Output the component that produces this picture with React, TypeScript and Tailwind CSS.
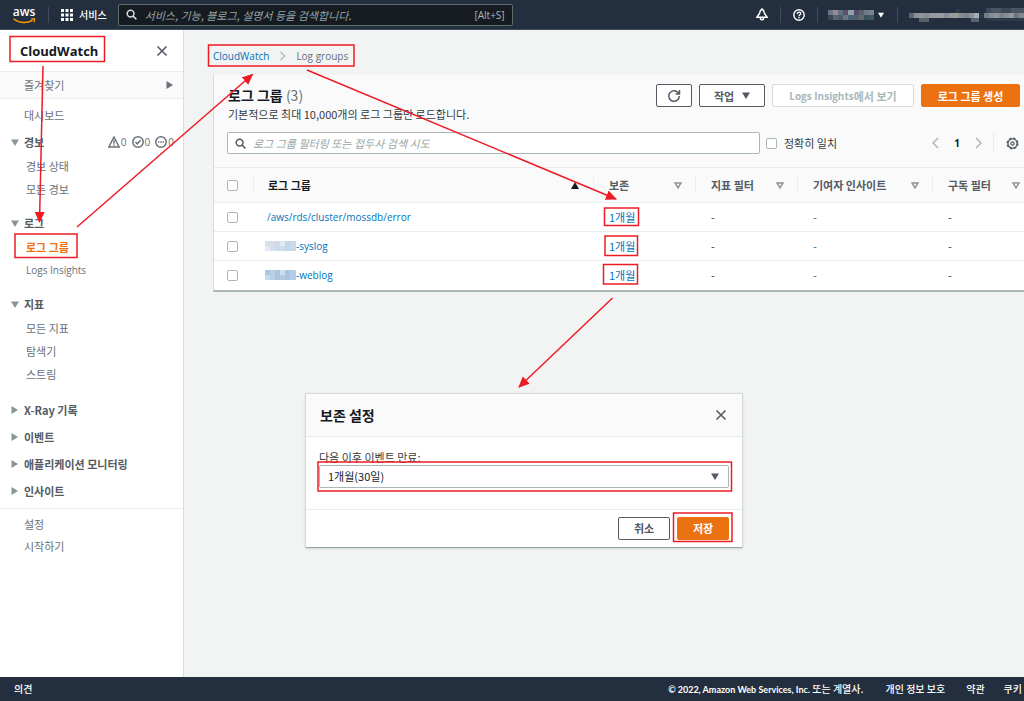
import type { ReactNode } from "react";

type IconProps = { className?: string };

const Search = ({ className }: IconProps) => (
  <svg viewBox="0 0 12 12" className={className} fill="none" stroke="currentColor" strokeWidth="1.7" aria-hidden="true">
    <circle cx="5" cy="5" r="3.7" />
    <path d="M7.7 7.7 11.3 11.3" />
  </svg>
);

const Close = ({ className }: IconProps) => (
  <svg viewBox="0 0 12 12" className={className} fill="none" stroke="currentColor" strokeWidth="1.6" aria-hidden="true">
    <path d="M1.5 1.5 10.5 10.5M10.5 1.5 1.5 10.5" />
  </svg>
);

const Down = ({ className }: IconProps) => (
  <svg viewBox="0 0 8 7" className={className} fill="currentColor" aria-hidden="true">
    <path d="M0 .5h8L4 7z" />
  </svg>
);

const Right = ({ className }: IconProps) => (
  <svg viewBox="0 0 7 8" className={className} fill="currentColor" aria-hidden="true">
    <path d="M.5 0v8L7 4z" />
  </svg>
);

const Chevron = ({ className }: IconProps) => (
  <svg viewBox="0 0 7 12" className={className} fill="none" stroke="currentColor" strokeWidth="1.5" aria-hidden="true">
    <path d="M1 1 6 6 1 11" />
  </svg>
);

const SortOutline = ({ className }: IconProps) => (
  <svg viewBox="0 0 8 7" className={className} fill="none" stroke="currentColor" strokeWidth="1.5" aria-hidden="true">
    <path d="M1 1h6L4 5.8z" />
  </svg>
);

const USER_MOSAIC = [
  ["#66788c", "#9d8a8f", "#5f7487", "#5e4f6d", "#93a3a5", "#54496a", "#5a616b", "#6b7a83", "#72858a"],
  ["#38485a", "#5b6471", "#50596c", "#6a7683", "#4b6070", "#4f6270", "#646b6c", "#3d5360", "#435866"],
];
const ACCOUNT_MOSAIC = [
  "#566684", "#8b8f96", "#909699", "#868e94", "#949a9d", "#959b9e", "#9a9d9f", "#868e98", "#989a9c", "#9b9c99", "#868b93",
  "#7a8590", "#8c9298", "#a3b0b8", "#2b3848", "#737b86", "#868d96", "#8e949b", "#7a8490", "#858c95", "#9499a0", "#6e7781", "#808892",
];

function Header() {
  return (
    <header className="flex h-[30px] items-center border-b border-[#414d5c] bg-[#232f3e] text-white">
      <a href="#home" className="ml-3 flex w-6 flex-col items-center pt-px" aria-label="aws">
        <span className="font-[Open_Sans,sans-serif] text-[12px] leading-[11px] font-semibold">aws</span>
        <svg viewBox="0 0 24 7" className="h-[7px] w-6" fill="none" stroke="#f90" aria-hidden="true">
          <path d="M1.500 1.800C7 6.500 15 6.600 20.500 3.400" strokeWidth="1.500" />
          <path d="M19 2.200 22.600 1.800 22 5.400" strokeWidth="1.200" />
        </svg>
      </a>
      <span className="ml-3 h-4 w-px bg-[#414d5c]" />
      <button className="ml-3 flex items-center gap-[6px] text-[10px] leading-[14px] font-medium">
        <svg viewBox="0 0 12 12" className="h-3 w-3" fill="currentColor" aria-hidden="true">
          <path d="M0 0h3v3H0zM4.500 0h3v3h-3zM9 0h3v3H9zM0 4.500h3v3H0zM4.500 4.500h3v3h-3zM9 4.500h3v3H9zM0 9h3v3H0zM4.500 9h3v3h-3zM9 9h3v3H9z" />
        </svg>
        서비스
      </button>
      <label className="ml-[11px] flex h-[22px] w-[395px] shrink-0 items-center gap-2 rounded-[2px] border border-[#5d6b6b] bg-[#161b22] px-[7px]">
        <Search className="h-[11px] w-[11px] text-[#d5dbdb]" />
        <input
          type="search"
          aria-label="검색"
          placeholder="서비스, 기능, 블로그, 설명서 등을 검색합니다."
          className="min-w-0 flex-1 bg-transparent text-[11px] outline-none placeholder:text-[#95a5a6] placeholder:italic"
        />
        <span className="font-[Open_Sans,sans-serif] text-[10px] text-[#aab7b8]">[Alt+S]</span>
      </label>
      <div className="ml-auto flex items-center">
        <button aria-label="알림">
          <svg viewBox="0 0 12 13" className="h-[13px] w-3" fill="none" stroke="currentColor" strokeWidth="1.500" aria-hidden="true">
            <path d="M6 1C4.200 2 3.700 4 3.500 5.500L1 9.200h10L8.500 5.500C8.300 4 7.800 2 6 1zM4.300 9.500c0 3 3.400 3 3.400 0" />
          </svg>
        </button>
        <span className="ml-3 h-4 w-px bg-[#414d5c]" />
        <button aria-label="도움말" className="ml-3">
          <svg viewBox="0 0 12 12" className="h-3 w-3" fill="none" stroke="currentColor" strokeWidth="1.400" aria-hidden="true">
            <circle cx="6" cy="6" r="5.200" />
            <path d="M4.300 4.900C4.300 2.500 7.800 2.600 7.700 4.700 7.600 5.900 6 5.700 6 7.200M6 8v1.300" />
          </svg>
        </button>
        <span className="ml-3 h-4 w-px bg-[#414d5c]" />
        <button aria-label="계정" className="ml-[10px] flex items-center gap-1">
          <svg viewBox="0 0 45 10" className="h-[10px] w-[46px]" preserveAspectRatio="none" shapeRendering="crispEdges" aria-hidden="true">
            {USER_MOSAIC.map((row, y) => row.map((c, x) => <rect key={`${x}-${y}`} x={x * 5} y={y * 5} width="5" height="5" fill={c} />))}
          </svg>
          <Down className="h-[6px] w-[6px]" />
        </button>
        <span className="ml-[13px] h-4 w-px bg-[#414d5c]" />
        <button aria-label="리전" className="ml-[11px]">
          <svg viewBox="0 0 115 14" className="block h-[14px] w-[115px]" shapeRendering="crispEdges" aria-hidden="true">
            {ACCOUNT_MOSAIC.map((c, x) => <rect key={x} x={x * 5} y="5" width="5" height="5" fill={c} />)}
            <path d="M77 0h35v5H77z" fill="#3b4756" />
            <path d="M82 0h10v5H82zM102 0h13v5h-13z" fill="#4a5562" />
            <path d="M10 10h10v4H10zM62 10h8v4h-8z" fill="#56636f" />
            <path d="M46 1h5v4h-5zM77 10h38v3H77z" fill="#2c3949" />
          </svg>
        </button>
      </div>
    </header>
  );
}

function NavLink({ children, active, latin }: { children: ReactNode; active?: boolean; latin?: boolean }) {
  return (
    <li className="flex h-[23px] items-center pl-[26px]">
      <a
        href="#nav"
        className={`${active ? "font-bold text-[#ec7211]" : "text-[#687078]"} ${latin ? "font-[Open_Sans,sans-serif] text-[10px]" : ""}`}
      >
        {children}
      </a>
    </li>
  );
}

function NavGroup({ title, badge, children }: { title: string; badge?: ReactNode; children: ReactNode }) {
  return (
    <section className="mb-[11px]">
      <div className="flex h-6 items-center pr-[9px] pl-[11px]">
        <button className="flex items-center gap-[5px] font-bold text-[#545b64]">
          <Down className="h-[7px] w-2 text-[#879596]" />
          {title}
        </button>
        {badge}
      </div>
      <ul>{children}</ul>
    </section>
  );
}

function AlarmCounts() {
  return (
    <div className="ml-auto flex items-center gap-px font-[Open_Sans,sans-serif] text-[10px] text-[#687078]">
      <svg viewBox="0 0 12 12" className="h-3 w-3" fill="none" stroke="currentColor" strokeWidth="1.500" aria-hidden="true">
        <path d="M6 1 11.200 11H.8zM6 4.300v3.400M6 8.500v1.300" />
      </svg>
      0
      <svg viewBox="0 0 12 12" className="ml-1 h-3 w-3" fill="none" stroke="currentColor" strokeWidth="1.500" aria-hidden="true">
        <circle cx="6" cy="6" r="5.200" />
        <path d="M3.500 6 5.300 7.800 8.600 4.300" />
      </svg>
      0
      <svg viewBox="0 0 12 12" className="ml-1 h-3 w-3" fill="none" stroke="currentColor" strokeWidth="1.500" aria-hidden="true">
        <circle cx="6" cy="6" r="5.200" />
        <path d="M3 6h1.400M5.300 6h1.400M7.600 6H9" />
      </svg>
      0
    </div>
  );
}

function Sidebar() {
  return (
    <nav className="w-[184px] shrink-0 border-r border-[#d9dede] bg-white">
      <div className="flex h-[41px] items-center justify-between pr-[15px] pl-5">
        <h2 className="font-[Open_Sans,sans-serif] text-[13px] font-bold text-[#16191f]">CloudWatch</h2>
        <button aria-label="닫기">
          <Close className="h-3 w-3 text-[#545b64]" />
        </button>
      </div>
      <button className="flex h-7 w-full items-center justify-between border-y border-[#eaeded] bg-[#fafafa] pr-[10px] pl-6 text-[#687078]">
        즐겨찾기
        <Right className="h-2 w-[7px] text-[#687078]" />
      </button>
      <a href="#dashboard" className="mt-1 mb-[3px] flex h-6 items-center pl-6 text-[#687078]">
        대시보드
      </a>
      <NavGroup title="경보" badge={<AlarmCounts />}>
        <NavLink>경보 상태</NavLink>
        <NavLink>모든 경보</NavLink>
      </NavGroup>
      <NavGroup title="로그">
        <NavLink active>로그 그룹</NavLink>
        <NavLink latin>Logs Insights</NavLink>
      </NavGroup>
      <NavGroup title="지표">
        <NavLink>모든 지표</NavLink>
        <NavLink>탐색기</NavLink>
        <NavLink>스트림</NavLink>
      </NavGroup>
      <ul className="border-b border-[#eaeded] pb-1">
        {["X-Ray 기록", "이벤트", "애플리케이션 모니터링", "인사이트"].map((t) => (
          <li key={t} className="flex h-[27px] items-center pl-[11px]">
            <button className="flex items-center gap-[6px] font-bold text-[#545b64]">
              <Right className="h-2 w-[7px] text-[#879596]" />
              {t}
            </button>
          </li>
        ))}
      </ul>
      <div className="flex flex-col pt-1 pl-6 text-[#687078]">
        <a href="#settings" className="flex h-[22px] items-center">설정</a>
        <a href="#start" className="flex h-[22px] items-center">시작하기</a>
      </div>
    </nav>
  );
}

const CHECK = "block h-[11px] w-[11px] appearance-none rounded-[2px] border border-[#aab7b8] bg-white checked:bg-[#0073bb]";
const BTN = "flex h-[23px] items-center justify-center rounded-[2px] border font-bold";

function HeadCell({ children }: { children: string }) {
  return (
    <th scope="col" className="p-0">
      <div className="flex h-4 items-center justify-between border-l border-[#eaeded] pr-[13px] pl-[15px] font-bold text-[#545b64]">
        {children}
        <SortOutline className="h-[7px] w-2 text-[#879596]" />
      </div>
    </th>
  );
}

const ROWS = [
  { id: "error", text: "/aws/rds/cluster/mossdb/error", mask: null },
  { id: "syslog", text: "-syslog", mask: ["#d5dfee", "#dbdcea", "#cbdcee", "#d0dfee", "#c3d7eb", "#c9d9ea"] },
  { id: "weblog", text: "-weblog", mask: ["#aac6e2", "#b9cfe5", "#a9c4df", "#b3cbe2", "#a8c5e2", "#b5cde5"] },
];

function LogTable() {
  return (
    <table className="w-full table-fixed border-collapse text-left">
      <colgroup>
        <col className="w-[39px]" />
        <col />
        <col className="w-[102px]" />
        <col className="w-[102px]" />
        <col className="w-[135px]" />
        <col className="w-[92px]" />
      </colgroup>
      <thead>
        <tr className="h-[35px] border-y border-[#eaeded] bg-[#fafafa]">
          <th scope="col" className="p-0 pl-[13px]">
            <input type="checkbox" aria-label="모두 선택" className={CHECK} />
          </th>
          <th scope="col" className="p-0" aria-sort="ascending">
            <div className="flex h-4 items-center justify-between border-l border-[#eaeded] pr-[14px] pl-[14px] font-bold text-[#16191f]">
              로그 그룹
              <svg viewBox="0 0 8 7" className="h-[7px] w-2" fill="currentColor" aria-hidden="true">
                <path d="M4 0 8 7H0z" />
              </svg>
            </div>
          </th>
          <HeadCell>보존</HeadCell>
          <HeadCell>지표 필터</HeadCell>
          <HeadCell>기여자 인사이트</HeadCell>
          <th scope="col" className="p-0">
            <div className="flex h-4 items-center justify-between border-l border-[#eaeded] pr-1 pl-[15px] font-bold text-[#545b64]">
              구독 필터
              <SortOutline className="h-[7px] w-2 text-[#879596]" />
            </div>
          </th>
        </tr>
      </thead>
      <tbody>
        {ROWS.map((r) => (
          <tr key={r.id} className="h-[29px] border-b border-[#eaeded] bg-white last:border-b-0">
            <td className="p-0 pl-[13px]">
              <input type="checkbox" aria-label={r.text} className={CHECK} />
            </td>
            <td className="p-0">
              <a
                href="#group"
                className={`flex items-center font-[Open_Sans,sans-serif] text-[10px] text-[#0073bb] ${r.mask ? "pl-3" : "pl-[14px]"}`}
              >
                {r.mask && (
                  <svg viewBox="0 0 31 10" className="h-[10px] w-[31px]" shapeRendering="crispEdges" aria-hidden="true">
                    {r.mask.map((c, i) => <rect key={i} x={i * 5} width="6" height="10" fill={c} />)}
                    <path d="M0 5h5v5H0zM15 0h5v5h-5z" fill="#fff" fillOpacity=".35" />
                  </svg>
                )}
                {r.text}
              </a>
            </td>
            <td className="p-0 pl-4">
              <a href="#retention" className="text-[#0073bb]">1개월</a>
            </td>
            <td className="p-0 pl-4">-</td>
            <td className="p-0 pl-4 text-[#0073bb]">-</td>
            <td className="p-0 pl-4">-</td>
          </tr>
        ))}
      </tbody>
    </table>
  );
}

function LogPanel() {
  return (
    <section className="border-b-2 border-l border-b-[#aab7b8] border-l-[#d5dbdb] bg-[#fafafa]">
      <div className="flex items-start justify-between pt-[9px] pr-1 pl-[14px]">
        <div>
          <h1 className="text-[14px] leading-[22px] font-bold text-[#16191f]">
            로그 그룹 <span className="font-normal text-[#687078]">(3)</span>
          </h1>
          <p className="leading-4">기본적으로 최대 10,000개의 로그 그룹만 로드합니다.</p>
        </div>
        <div className="flex gap-[7px]">
          <button aria-label="새로 고침" className={`${BTN} w-9 border-[#545b64] bg-white text-[#545b64]`}>
            <svg viewBox="0 0 14 14" className="h-[14px] w-[14px]" fill="none" stroke="currentColor" strokeWidth="1.500" aria-hidden="true">
              <path d="M12.300 7A5.300 5.300 0 1 1 10.200 2.800L12.200 4.600M12.500 1v3.900H8.600" />
            </svg>
          </button>
          <button className={`${BTN} w-[66px] gap-2 border-[#545b64] bg-white text-[#545b64]`}>
            작업
            <Down className="h-[7px] w-2" />
          </button>
          <button disabled className={`${BTN} w-[142px] border-[#d5dbdb] bg-white text-[#aab7b8]`}>
            <span className="font-[Open_Sans,sans-serif] text-[10px]">Logs Insights</span>에서 보기
          </button>
          <button className={`${BTN} w-[99px] border-[#ec7211] bg-[#ec7211] text-white`}>로그 그룹 생성</button>
        </div>
      </div>
      <div className="flex items-center pt-[10px] pr-[5px] pb-[13px] pl-[13px]">
        <label className="flex h-[22px] w-[533px] items-center gap-[7px] rounded-[2px] border border-[#aab7b8] bg-white px-[7px]">
          <Search className="h-[11px] w-[11px] text-[#545b64]" />
          <input
            type="search"
            aria-label="로그 그룹 필터"
            placeholder="로그 그룹 필터링 또는 접두사 검색 시도"
            className="min-w-0 flex-1 bg-transparent text-[11px] outline-none placeholder:text-[#95a5a6] placeholder:italic"
          />
        </label>
        <label className="ml-[6px] flex items-center gap-[7px]">
          <input type="checkbox" className={CHECK} />
          정확히 일치
        </label>
        <div className="ml-auto flex items-center">
          <button aria-label="이전">
            <Chevron className="h-3 w-[7px] rotate-180 text-[#aab7b8]" />
          </button>
          <span className="w-9 text-center font-[Open_Sans,sans-serif] text-[10px] font-bold text-[#16191f]">1</span>
          <button aria-label="다음">
            <Chevron className="h-3 w-[7px] text-[#aab7b8]" />
          </button>
          <span className="ml-[11px] h-[22px] w-px bg-[#eaeded]" />
          <button aria-label="설정" className="ml-3">
            <svg viewBox="0 0 14 14" className="h-[13px] w-[13px] text-[#545b64]" fill="none" stroke="currentColor" aria-hidden="true">
              <circle cx="7" cy="7" r="5.700" strokeWidth="1.600" strokeDasharray="2.600 1.877" />
              <circle cx="7" cy="7" r="4.900" strokeWidth="1.400" />
              <circle cx="7" cy="7" r="1.800" strokeWidth="1.300" />
            </svg>
          </button>
        </div>
      </div>
      <LogTable />
    </section>
  );
}

function RetentionDialog() {
  return (
    <section
      role="dialog"
      aria-labelledby="retention-title"
      className="mt-[101px] ml-[92px] w-[438px] max-w-full border border-[#d5dbdb] border-b-[#95a5a6] bg-white shadow-sm"
    >
      <div className="flex h-[43px] items-center justify-between border-b border-[#eaeded] bg-[#fafafa] pr-[15px] pl-[14px]">
        <h2 id="retention-title" className="text-[14px] font-bold text-[#16191f]">보존 설정</h2>
        <button aria-label="닫기">
          <Close className="h-3 w-3 text-[#545b64]" />
        </button>
      </div>
      <div className="px-[13px] pt-3 pb-[21px]">
        <label htmlFor="retention" className="block leading-4">다음 이후 이벤트 만료:</label>
        <div className="grid items-center">
          <select
            id="retention"
            className="col-start-1 row-start-1 h-[23px] w-full appearance-none rounded-[2px] border border-[#aab7b8] bg-white px-2 text-[11px] text-[#16191f]"
          >
            <option>1개월(30일)</option>
          </select>
          <Down className="pointer-events-none col-start-1 row-start-1 mr-[10px] h-[7px] w-2 justify-self-end text-[#545b64]" />
        </div>
      </div>
      <div className="flex justify-end gap-[7px] border-t border-[#eaeded] px-[13px] py-[7px]">
        <button className={`${BTN} w-[52px] border-[#545b64] bg-white text-[#545b64]`}>취소</button>
        <button className={`${BTN} w-[52px] border-[#ec7211] bg-[#ec7211] text-white`}>저장</button>
      </div>
    </section>
  );
}

function Annotations() {
  return (
    <svg
      viewBox="0 0 1024 701"
      className="pointer-events-none absolute top-0 left-0 h-[701px] w-[1024px]"
      fill="none"
      stroke="#ed1c24"
      strokeWidth="1.500"
      aria-hidden="true"
    >
      <defs>
        <marker id="head" markerUnits="userSpaceOnUse" markerWidth="12" markerHeight="12" refX="10" refY="5" orient="auto">
          <path d="M0 0 11 5 0 10z" fill="#ed1c24" stroke="none" />
        </marker>
      </defs>
      <rect x="10" y="36.500" width="94.500" height="25" />
      <rect x="208.500" y="45" width="145.500" height="21" />
      <rect x="15" y="234" width="62" height="23.500" />
      <rect x="604.500" y="208" width="34" height="17.500" />
      <rect x="605" y="236" width="32.500" height="19.500" />
      <rect x="603.500" y="264.500" width="34" height="19.500" />
      <rect x="318" y="462" width="413.500" height="29" />
      <rect x="673.500" y="513" width="58.500" height="28.500" />
      <path d="M43 66 39.500 222" markerEnd="url(#head)" />
      <path d="M77 227 252.500 74.500" markerEnd="url(#head)" />
      <path d="M307 70 616 199" markerEnd="url(#head)" />
      <path d="M612.500 298 519 387" markerEnd="url(#head)" />
    </svg>
  );
}

export default function App() {
  return (
    <div className="relative flex min-h-screen flex-col overflow-hidden bg-[#f2f3f3] font-[Noto_Sans_CJK_KR,sans-serif] text-[11px] leading-4 text-[#333a42]">
      <Header />
      <div className="flex flex-1">
        <Sidebar />
        <main className="min-w-0 flex-1 pl-[29px]">
          <nav aria-label="경로" className="flex h-[45px] items-center gap-[10px] pt-[6px] font-[Open_Sans,sans-serif] text-[10px]">
            <a href="#cloudwatch" className="text-[#0073bb]">CloudWatch</a>
            <Chevron className="h-[10px] w-[7px] text-[#aab7b8]" />
            <span className="text-[#687078]">Log groups</span>
          </nav>
          <LogPanel />
          <RetentionDialog />
        </main>
      </div>
      <footer className="flex h-6 items-center bg-[#232f3e] pr-[2px] pl-[14px] text-[10px] font-medium whitespace-nowrap text-white">
        <button>의견</button>
        <span className="ml-auto">
          <span className="font-[Lato,sans-serif] text-[9px] font-bold">© 2022, Amazon Web Services, Inc.</span> 또는 계열사.
        </span>
        <a href="#privacy" className="ml-[22px]">개인 정보 보호</a>
        <a href="#terms" className="ml-[21px]">약관</a>
        <a href="#cookies" className="ml-[19px]">쿠키</a>
      </footer>
      <Annotations />
    </div>
  );
}
